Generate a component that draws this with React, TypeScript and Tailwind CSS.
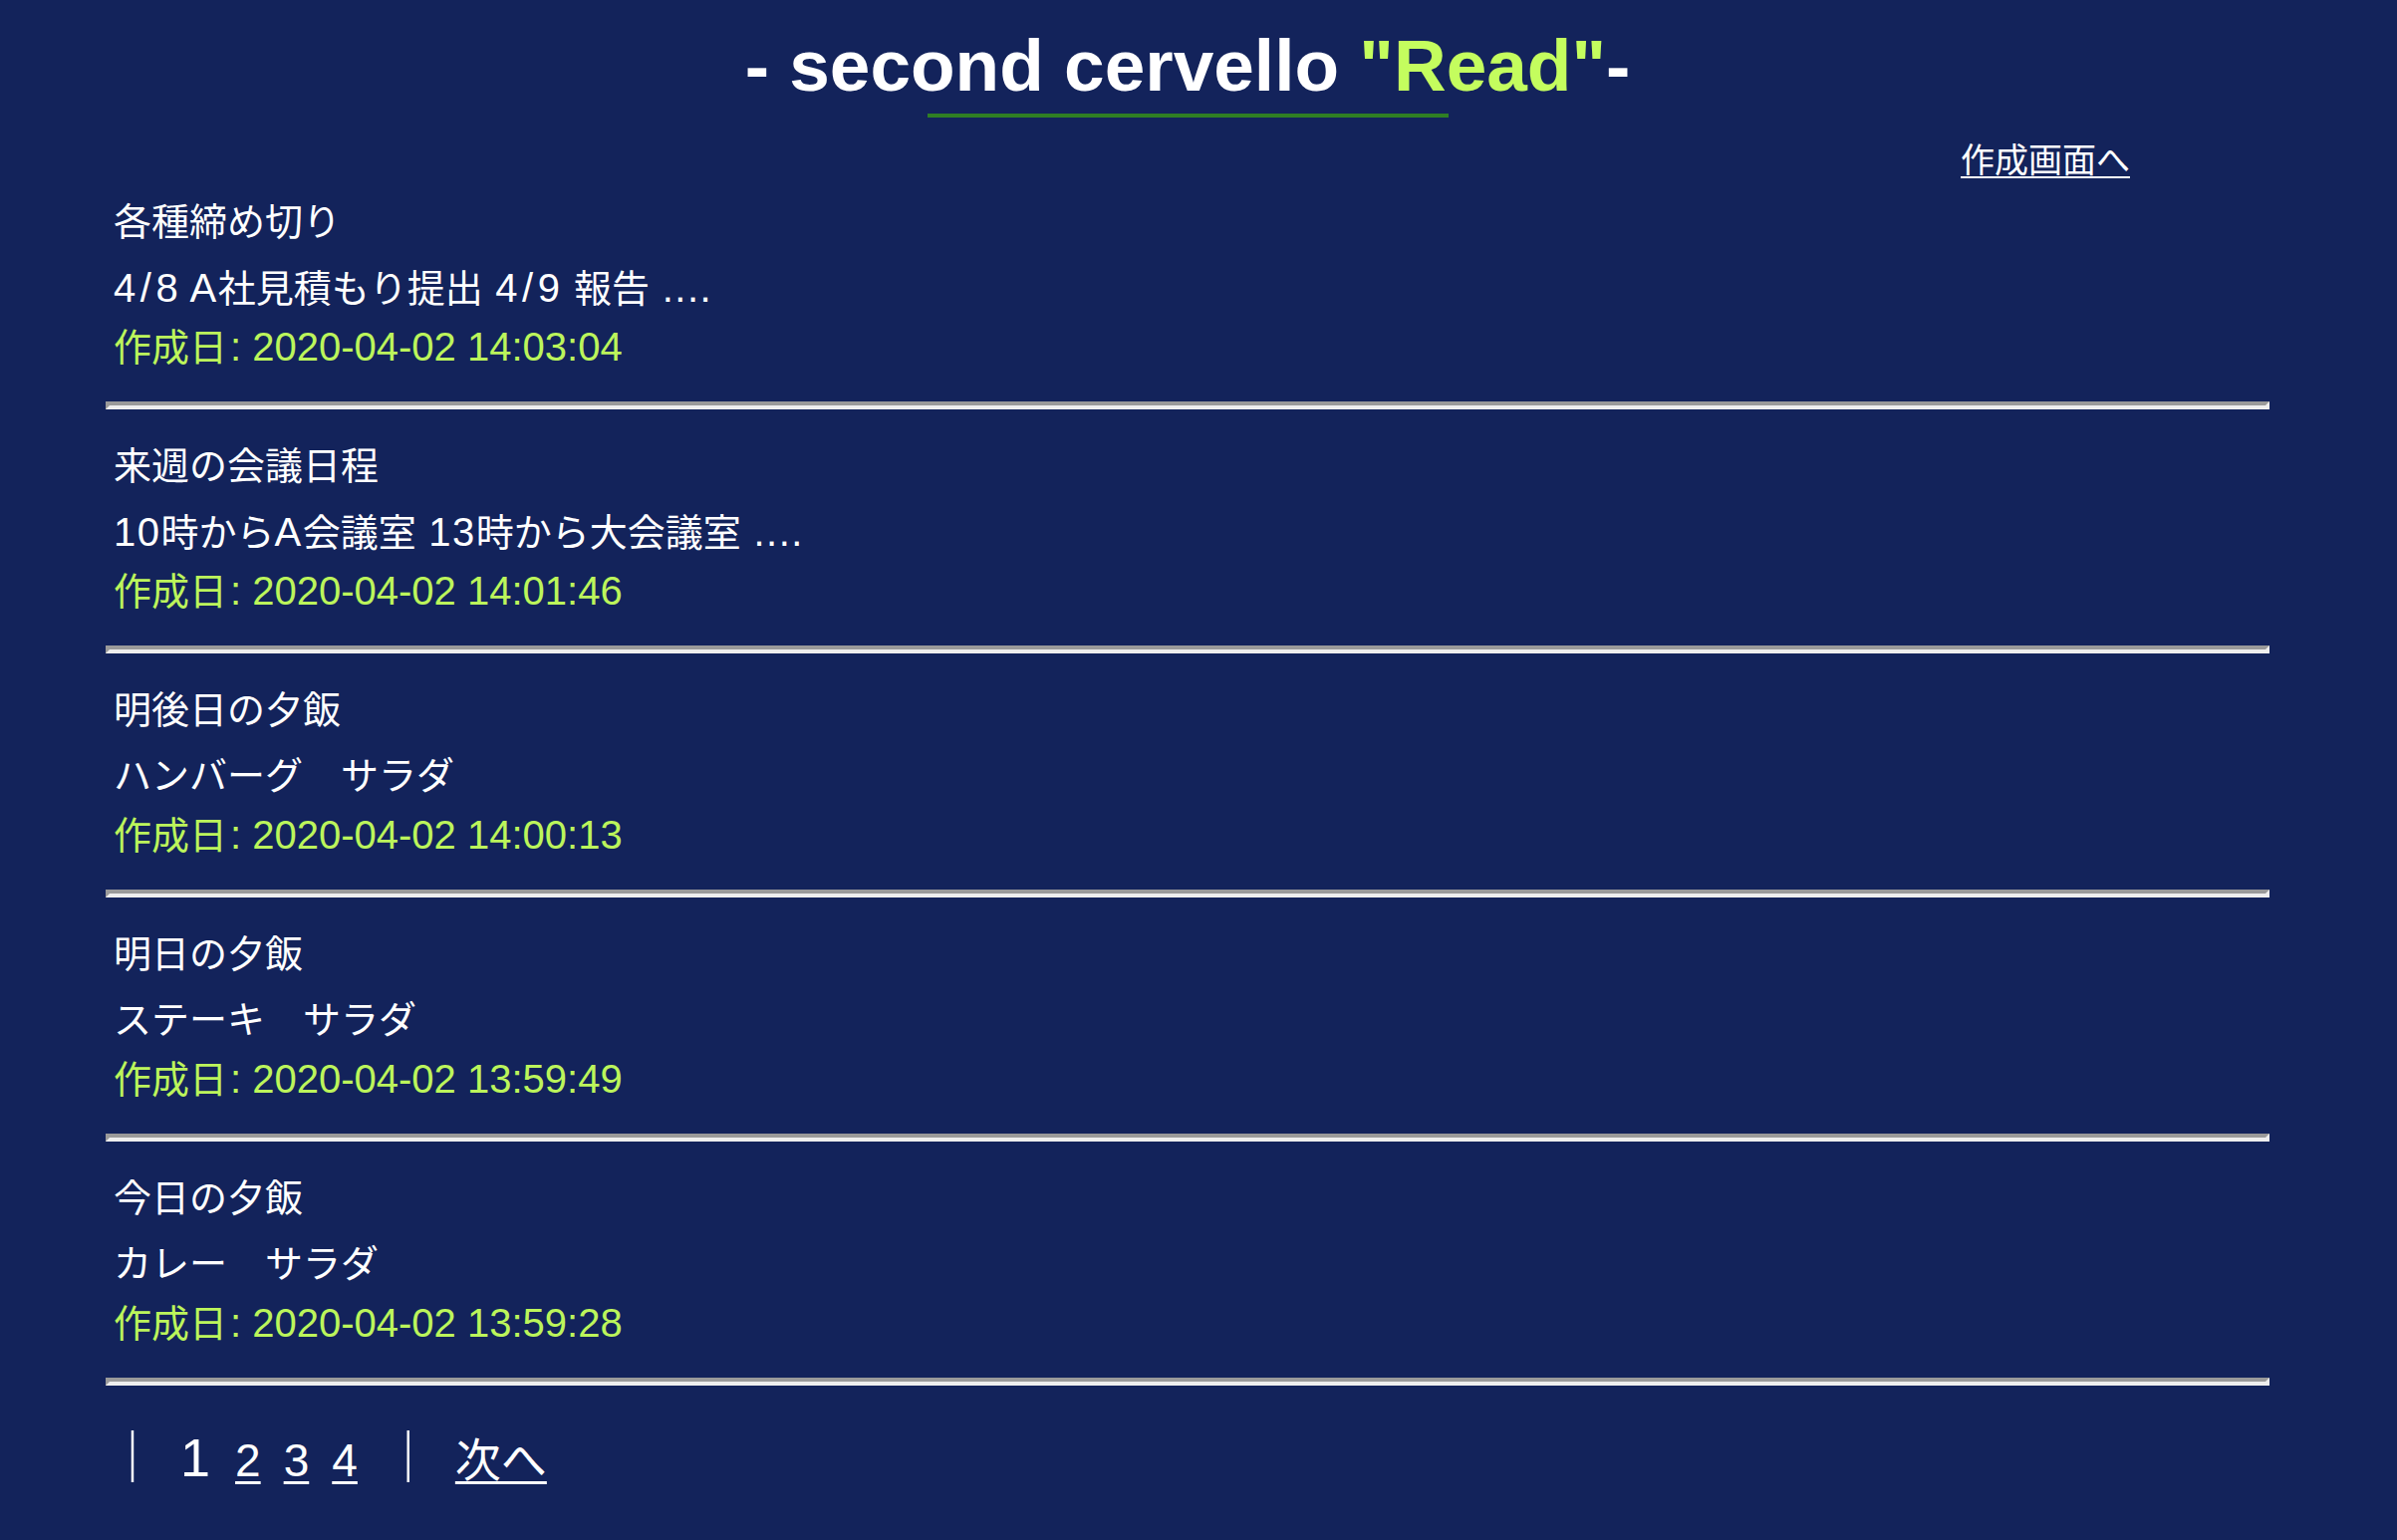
import React from "react";

const NOTES = [
  { title: "各種締め切り", body: "4/8 A社見積もり提出 4/9 報告 ....", date: "2020-04-02 14:03:04" },
  { title: "来週の会議日程", body: "10時からA会議室 13時から大会議室 ....", date: "2020-04-02 14:01:46" },
  { title: "明後日の夕飯", body: "ハンバーグ　サラダ", date: "2020-04-02 14:00:13" },
  { title: "明日の夕飯", body: "ステーキ　サラダ", date: "2020-04-02 13:59:49" },
  { title: "今日の夕飯", body: "カレー　サラダ", date: "2020-04-02 13:59:28" },
];

const font = "font-['Liberation_Sans','Noto_Sans_CJK_JP',sans-serif]";

// latin runs are a bit larger than the kana/kanji, like the original font mix
const Mixed = ({ text }: { text: string }) => (
  <>
    {text.split(/([\x20-\x7E]+)/).map((part, i) =>
      /^[\x20-\x7E]+$/.test(part) ? (
        <span key={i} className="text-[40px] tracking-[1.5px]">
          {part.split(/(\/)/).map((p, j) =>
            p === "/" ? (
              <span key={j} className="px-[3px]">/</span>
            ) : (
              <React.Fragment key={j}>{p}</React.Fragment>
            )
          )}
        </span>
      ) : (
        <React.Fragment key={i}>{part}</React.Fragment>
      )
    )}
  </>
);

const App = () => {
  return (
    <div className={`min-h-screen w-full bg-[#13235b] text-white ${font}`}>
      <div className="ml-[106px] w-[2172px] pb-10">
        {/* Header */}
        <div className="flex flex-col items-center pt-[24px]">
          <h1 className="h-[84px] text-[73px] leading-[84px] font-bold whitespace-nowrap">
            - second cervello <span className="text-[#c4fd5e]">"Read"</span>-
          </h1>
          <div className="mt-[6px] h-[4px] w-[523px] bg-[#2f7f24]" />
        </div>

        <div className="mt-[23px] flex justify-end pr-[140px]">
          <a href="#" className="h-[40px] text-[34px] leading-[40px] underline decoration-2 underline-offset-[4px]">
            作成画面へ
          </a>
        </div>

        {/* List */}
        <div className="mt-[17px]">
          {NOTES.map((note) => (
            <div key={note.date}>
              <div className="pl-[8px] text-[38px]">
                <div className="h-[50px] leading-[50px] whitespace-nowrap">{note.title}</div>
                <div className="mt-[16px] h-[50px] leading-[50px] whitespace-nowrap">
                  <Mixed text={note.body} />
                </div>
                <div className="mt-[9px] h-[50px] leading-[50px] whitespace-nowrap text-[#bcf55b]">
                  作成日<span className="ml-[3px] text-[40px]">: {note.date}</span>
                </div>
              </div>
              <div className="mt-[30px] mb-[32px] h-0 border-t-4 border-b-4 border-l-4 border-r-4 border-t-[#9a9a9a] border-l-[#9a9a9a] border-b-[#eeeeee] border-r-[#eeeeee]" />
            </div>
          ))}
        </div>

        {/* Pagination */}
        <div className="-mt-[32px] pt-[42px] flex items-baseline text-[46px] leading-[60px]">
          <span className="ml-[1px] text-[52px] font-bold">｜</span>
          <span className="ml-[22px] text-[54px]">1</span>
          <a href="#" className="ml-[25px] underline decoration-3 underline-offset-[5px]">2</a>
          <a href="#" className="ml-[23px] underline decoration-3 underline-offset-[5px]">3</a>
          <a href="#" className="ml-[23px] underline decoration-3 underline-offset-[5px]">4</a>
          <span className="ml-[25px] text-[52px] font-bold">｜</span>
          <a href="#" className="ml-[21px] underline decoration-3 underline-offset-[5px]">次へ</a>
        </div>
      </div>
    </div>
  );
};

export default App;
